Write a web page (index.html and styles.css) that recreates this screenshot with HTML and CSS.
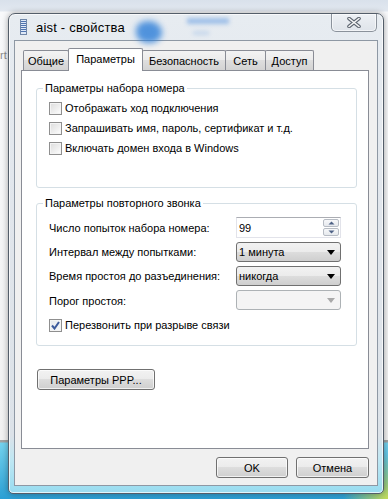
FILE: index.html
```html
<!DOCTYPE html>
<html lang="ru">

<head>
  <meta charset="UTF-8">
  <meta name="viewport" content="width=device-width, initial-scale=1.0">
  <title>aist - свойства</title>
  <link rel="stylesheet" href="styles.css">
</head>

<body>
  <div class="desktop">
    <span class="behind-text">rt</span>
    <div class="window">
      <div class="glare glare-icon"></div>
      <div class="glare glare-text"></div>
      <div class="glare glare-text2"></div>

      <div class="titlebar">
        <svg class="app-icon" width="7" height="16" viewBox="0 0 7 16">
          <rect x="0.5" y="0.5" width="6" height="15" fill="#dfe9f7" stroke="#6f86a8"/>
          <rect x="1" y="2" width="5" height="1" fill="#4f74b0"/>
          <rect x="1" y="4" width="5" height="1" fill="#4f74b0"/>
          <rect x="1" y="6" width="5" height="1" fill="#4f74b0"/>
          <rect x="1" y="8" width="5" height="1" fill="#4f74b0"/>
          <rect x="1" y="10" width="5" height="1" fill="#4f74b0"/>
          <rect x="1" y="12" width="5" height="1" fill="#4f74b0"/>
        </svg>
        <span class="title">aist - свойства</span>
        <div class="close-btn">
          <svg width="14" height="11" viewBox="0 0 14 11">
            <path d="M2 1.5 L12 9.5 M12 1.5 L2 9.5" stroke="#5d6570" stroke-width="3.6" stroke-linecap="round"/>
            <path d="M2 1.5 L12 9.5 M12 1.5 L2 9.5" stroke="#f6f6f6" stroke-width="1.6" stroke-linecap="round"/>
          </svg>
        </div>
      </div>

      <div class="client">
        <div class="tabs">
          <div class="tab tab-general">Общие</div>
          <div class="tab tab-options active">Параметры</div>
          <div class="tab tab-security">Безопасность</div>
          <div class="tab tab-network">Сеть</div>
          <div class="tab tab-sharing">Доступ</div>
        </div>

        <div class="panel">
          <fieldset class="group group-dial">
            <legend>Параметры набора номера</legend>
            <div class="check"><span class="box"></span>Отображать ход подключения</div>
            <div class="check"><span class="box"></span>Запрашивать имя, пароль, сертификат и т.д.</div>
            <div class="check"><span class="box"></span>Включать домен входа в Windows</div>
          </fieldset>

          <fieldset class="group group-redial">
            <legend>Параметры повторного звонка</legend>
            <div class="field-row row-spin">
              <span>Число попыток набора номера:</span>
              <div class="spin">
                <span class="spin-value">99</span>
                <div class="spin-btns">
                  <span class="spin-btn"><svg width="7" height="4" viewBox="0 0 7 4"><path d="M0.5 3.5 L3.5 0.5 L6.5 3.5 Z" fill="#4d6185"/></svg></span>
                  <span class="spin-btn"><svg width="7" height="4" viewBox="0 0 7 4"><path d="M0.5 0.5 L3.5 3.5 L6.5 0.5 Z" fill="#4d6185"/></svg></span>
                </div>
              </div>
            </div>
            <div class="field-row">
              <span>Интервал между попытками:</span>
              <div class="combo"><span>1 минута</span><svg class="arrow" width="8" height="5" viewBox="0 0 8 5"><path d="M0 0 H8 L4 5 Z" fill="#000"/></svg></div>
            </div>
            <div class="field-row">
              <span>Время простоя до разъединения:</span>
              <div class="combo"><span>никогда</span><svg class="arrow" width="8" height="5" viewBox="0 0 8 5"><path d="M0 0 H8 L4 5 Z" fill="#000"/></svg></div>
            </div>
            <div class="field-row row-idle">
              <span>Порог простоя:</span>
              <div class="combo disabled"><span></span><svg class="arrow" width="8" height="5" viewBox="0 0 8 5"><path d="M0 0 H8 L4 5 Z" fill="#a9a9a9"/></svg></div>
            </div>
            <div class="check check-redial">
              <span class="box checked">
                <svg width="9" height="9" viewBox="0 0 9 9"><path d="M1 4.5 L3.5 7.5 L8 1" fill="none" stroke="#3c5a9c" stroke-width="2"/></svg>
              </span>Перезвонить при разрыве связи
            </div>
          </fieldset>

          <button class="btn btn-ppp">Параметры PPP...</button>
        </div>

        <div class="footer">
          <button class="btn btn-ok">OK</button>
          <button class="btn btn-cancel">Отмена</button>
        </div>
      </div>
    </div>
  </div>
</body>

</html>
```

FILE: styles.css
```css
body {
  margin: 0;
  padding: 0;
  font-family: "Liberation Sans", Arial, sans-serif;
  font-size: 11px;
  color: #000;
}

.desktop {
  position: relative;
  width: 388px;
  height: 499px;
  overflow: hidden;
  box-sizing: border-box;
  padding: 13px 0 0 8px;
  background:
    radial-gradient(circle at 388px 499px, rgba(214, 226, 74, 0.9) 0, rgba(214, 226, 74, 0) 45px),
    linear-gradient(to bottom, #d9e1eb 0, #e2e8f0 11px, #f8f9fb 12px, #f2f2f2 440px, #a3a3a3 440px, #a3a3a3 442px, #74d2ee 443px, #2b9fd4 499px);
}

.behind-text {
  position: absolute;
  left: 0;
  top: 49px;
  color: #8a8a8a;
  font-size: 11px;
}

.window {
  position: relative;
  width: 376px;
  height: 481px;
  box-sizing: border-box;
  border: 1px solid #545e6a;
  border-radius: 7px 7px 5px 5px;
  padding: 0 5px 7px 5px;
  display: flex;
  flex-direction: column;
  background: linear-gradient(to bottom, #e7ecf1 0, #e1e6ec 40%, #dce2e8 88%, #bfe7f3 93%, #98dcf0 100%);
  box-shadow: 0 0 6px rgba(0, 0, 0, 0.35), inset 0 0 0 1px rgba(255, 255, 255, 0.7);
}

.glare {
  position: absolute;
  pointer-events: none;
}

.glare-icon {
  left: 127px;
  top: 7px;
  width: 26px;
  height: 22px;
  border-radius: 45% 55% 50% 50%;
  background: #2b7dd8;
  filter: blur(3px);
  opacity: 0.8;
}

.glare-text {
  left: 178px;
  top: 4px;
  width: 42px;
  height: 6px;
  background: #8cb4e6;
  filter: blur(2px);
  opacity: 0.8;
}

.glare-text2 {
  left: 184px;
  top: 17px;
  width: 16px;
  height: 4px;
  background: #b6cde9;
  filter: blur(2px);
  opacity: 0.7;
}

.titlebar {
  position: relative;
  height: 26px;
  display: flex;
  align-items: center;
}

.app-icon {
  margin-left: 6px;
}

.title {
  margin-left: 9px;
  font-size: 13px;
  letter-spacing: 0.2px;
}

.close-btn {
  margin-left: auto;
  margin-right: 1px;
  align-self: flex-start;
  width: 46px;
  height: 18px;
  box-sizing: border-box;
  border: 1px solid #8b929b;
  border-top: none;
  border-radius: 0 0 5px 5px;
  background: linear-gradient(to bottom, #eef1f5 0, #e6eaef 50%, #dfe4ea 100%);
  box-shadow: inset 0 0 0 1px rgba(255, 255, 255, 0.6);
  display: flex;
  align-items: center;
  justify-content: center;
}

.client {
  flex: 1;
  border: 1px solid #8e98a4;
  background-color: #f0f0f0;
  padding: 7px 8px 0 6px;
  display: flex;
  flex-direction: column;
}

.tabs {
  position: relative;
  z-index: 1;
  display: flex;
  align-items: flex-end;
  height: 23px;
  margin-bottom: -1px;
  padding-left: 2px;
}

.tab {
  box-sizing: border-box;
  height: 20px;
  margin-bottom: 1px;
  margin-left: -1px;
  padding-top: 3px;
  line-height: 14px;
  text-align: center;
  white-space: nowrap;
  border: 1px solid #898c95;
  border-bottom: none;
  border-radius: 2px 2px 0 0;
  background: linear-gradient(to bottom, #f3f3f3 0, #ebebeb 50%, #dedede 50%, #d3d3d3 100%);
}

.tab-general {
  margin-left: 0;
  width: 46px;
}

.tab-options {
  width: 75px;
}

.tab-security {
  width: 84px;
}

.tab-network {
  width: 41px;
}

.tab-sharing {
  width: 49px;
}

.tab.active {
  position: relative;
  z-index: 2;
  height: 23px;
  margin-bottom: 0;
  padding-top: 3px;
  background: #fff;
}

.panel {
  box-sizing: border-box;
  height: 379px;
  border: 1px solid #898c95;
  background-color: #fff;
  padding: 10px 11px 0 14px;
}

.group {
  margin: 0;
  padding: 0 15px 0 12px;
  border: 1px solid #d5dfe5;
  border-radius: 3px;
  white-space: nowrap;
}

.group legend {
  margin-left: -6px;
  padding: 0 2px;
  line-height: 14px;
}

.group-dial {
  padding-top: 3px;
  padding-bottom: 29px;
}

.group-redial {
  margin-top: 8px;
  padding-top: 7px;
  padding-bottom: 10px;
}

.check {
  display: flex;
  align-items: center;
  height: 20px;
}

.box {
  box-sizing: border-box;
  width: 13px;
  height: 13px;
  margin-right: 3px;
  border: 1px solid #8f8f8f;
  background: linear-gradient(135deg, #dcdcdc 0, #f0f0f0 60%, #ffffff 100%);
  box-shadow: inset 0 0 0 1px #f4f4f4;
  display: flex;
  align-items: center;
  justify-content: center;
}

.box.checked {
  background: linear-gradient(135deg, #e6e9ee 0, #f6f7f9 100%);
}

.check-redial {
  margin-top: 5px;
}

.field-row {
  display: flex;
  align-items: center;
  justify-content: space-between;
  height: 20px;
  margin-top: 4px;
}

.row-spin {
  height: 21px;
  margin-top: 0;
}

.row-idle span:first-child {
  padding-top: 2px;
}

.spin {
  box-sizing: border-box;
  width: 105px;
  height: 21px;
  display: flex;
  align-items: center;
  justify-content: space-between;
  border: 1px solid #e2e3ea;
  border-top-color: #abadb3;
  background-color: #fff;
  padding: 1px 1px 1px 2px;
}

.spin-btns {
  display: flex;
  flex-direction: column;
  gap: 1px;
  height: 17px;
}

.spin-btn {
  box-sizing: border-box;
  width: 16px;
  height: 8px;
  border: 1px solid #b7bcc4;
  border-radius: 2px;
  background: linear-gradient(to bottom, #f7f8fa 0, #e6e9ed 100%);
  display: flex;
  align-items: center;
  justify-content: center;
}

.combo {
  box-sizing: border-box;
  width: 105px;
  height: 20px;
  display: flex;
  align-items: center;
  justify-content: space-between;
  padding: 0 5px 0 2px;
  border: 1px solid #707070;
  border-radius: 3px;
  background: linear-gradient(to bottom, #f2f2f2 0, #ebebeb 50%, #dddddd 50%, #cfcfcf 100%);
}

.combo.disabled {
  border-color: #adb2b5;
  background: #f4f4f4;
}

.btn {
  box-sizing: border-box;
  height: 21px;
  padding: 0;
  font-family: inherit;
  font-size: 11px;
  color: #000;
  border: 1px solid #707070;
  border-radius: 3px;
  background: linear-gradient(to bottom, #f2f2f2 0, #ebebeb 50%, #dddddd 50%, #cfcfcf 100%);
  box-shadow: inset 0 0 0 1px rgba(255, 255, 255, 0.7);
}

.btn-ppp {
  margin: 23px 0 0 1px;
  width: 118px;
}

.footer {
  display: flex;
  justify-content: flex-end;
  gap: 8px;
  margin-top: 8px;
}

.btn-ok {
  width: 72px;
}

.btn-cancel {
  width: 73px;
}
```
